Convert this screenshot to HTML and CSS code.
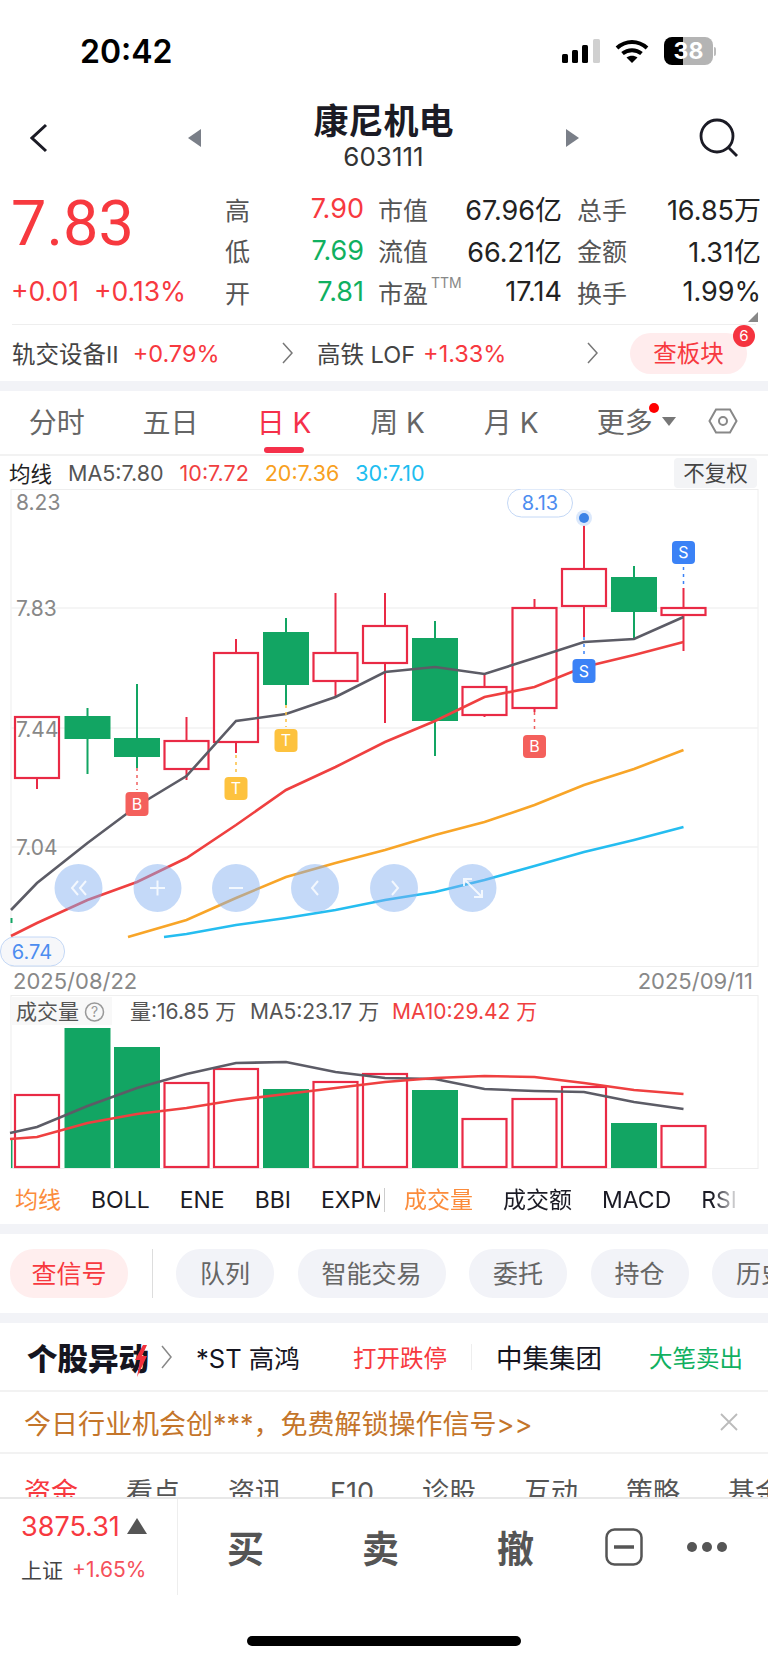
FILE: index.html
```html
<!DOCTYPE html>
<html>
<head>
  <title>康尼机电 603111</title>
  <link rel="stylesheet" href="styles.css">
</head>
<body>
  <div class="page">

    <div class="status">
      <span class="clock">20:42</span>
      <div class="status-icons">
        <svg width="38" height="24" viewBox="0 0 38 24">
          <rect x="0" y="15" width="6" height="9" rx="1.5" fill="#000"/>
          <rect x="10" y="11" width="6" height="13" rx="1.5" fill="#000"/>
          <rect x="20" y="6" width="6" height="18" rx="1.5" fill="#000"/>
          <rect x="31" y="0" width="7" height="24" rx="1.5" fill="#d0d0d0"/>
        </svg>
        <svg class="wifi" width="34" height="24" viewBox="0 0 34 24">
          <path d="M2 9C11 1 23 1 32 9M7.5 14.5C13 10 21 10 26.500 14.500" fill="none" stroke="#000" stroke-width="4"/>
          <path d="M11.500 18.500C15 16 19 16 22.500 18.500L17 24Z" fill="#000"/>
        </svg>
        <div class="battery"><span>38</span></div>
        <span class="battery-nub"></span>
      </div>
    </div>

    <div class="header">
      <svg class="back" width="18" height="30" viewBox="0 0 18 30">
        <path d="M16 2L2 15L16 28" fill="none" stroke="#1b1b25" stroke-width="3"/>
      </svg>
      <span class="arrow-left"></span>
      <div class="title-box">
        <div class="title">康尼机电</div>
        <div class="code">603111</div>
      </div>
      <span class="arrow-right"></span>
      <svg class="search" width="40" height="40" viewBox="0 0 40 40">
        <circle cx="18" cy="18" r="16" fill="none" stroke="#1b1b25" stroke-width="2.800"/>
        <path d="M29 29L38 38" stroke="#1b1b25" stroke-width="2.800"/>
      </svg>
    </div>

    <div class="quote">
      <div class="price-box">
        <div class="price">7.83</div>
        <div class="change"><span>+0.01</span><span>+0.13%</span></div>
      </div>
      <div class="stats">
        <span class="lbl">高</span><span class="val red">7.90</span>
        <span class="lbl">市值</span><span class="val">67.96亿</span>
        <span class="lbl">总手</span><span class="val">16.85万</span>
        <span class="lbl">低</span><span class="val green">7.69</span>
        <span class="lbl">流值</span><span class="val">66.21亿</span>
        <span class="lbl">金额</span><span class="val">1.31亿</span>
        <span class="lbl">开</span><span class="val green">7.81</span>
        <span class="lbl ttm-box">市盈<em class="ttm">TTM</em></span><span class="val">17.14</span>
        <span class="lbl">换手</span><span class="val">1.99%</span>
      </div>
      <span class="fold"></span>
    </div>

    <div class="sectors">
      <div class="sector sector-a">
        <span>轨交设备Ⅱ</span><span class="pct">+0.79%</span>
        <svg class="chev" width="11" height="22" viewBox="0 0 11 22"><path d="M1 1L10 11L1 21" fill="none" stroke="#777" stroke-width="1.500"/></svg>
      </div>
      <div class="sector sector-b">
        <span>高铁 LOF</span><span class="pct">+1.33%</span>
        <svg class="chev" width="11" height="22" viewBox="0 0 11 22"><path d="M1 1L10 11L1 21" fill="none" stroke="#777" stroke-width="1.500"/></svg>
      </div>
      <div class="board-btn">查板块<span class="badge">6</span></div>
    </div>

    <div class="band"></div>

    <div class="tabs">
      <span class="tab">分时</span>
      <span class="tab">五日</span>
      <span class="tab active">日 K</span>
      <span class="tab">周 K</span>
      <span class="tab">月 K</span>
      <span class="tab more">更多<i class="dot"></i><i class="caret"></i></span>
      <svg class="hex" width="30" height="26" viewBox="0 0 30 26">
        <path d="M1.500 13L8 1.500H22L28.500 13L22 24.500H8Z" fill="none" stroke="#888" stroke-width="2"/>
        <circle cx="15" cy="13" r="4" fill="none" stroke="#888" stroke-width="2"/>
      </svg>
    </div>

    <div class="legend">
      <b>均线</b>
      <span class="c-gray">MA5:7.80</span>
      <span class="c-red">10:7.72</span>
      <span class="c-orange">20:7.36</span>
      <span class="c-blue">30:7.10</span>
      <span class="chip">不复权</span>
    </div>

    <svg class="chart" width="768" height="478" viewBox="0 489 768 478">
      <rect class="frame" x="11" y="489.500" width="747" height="477"/>
      <path class="grid" d="M11 608H758M11 728H758M11 847H758"/>

      <g class="wick-down">
        <path d="M87.500 708V774M137 684V768M286 618V705M435 621V756M634 566V639M11.500 918V923"/>
      </g>
      <g class="body-down">
        <rect x="64.500" y="716" width="46" height="23"/>
        <rect x="114" y="738" width="46" height="19"/>
        <rect x="263" y="632" width="46" height="53"/>
        <rect x="412" y="638" width="46" height="83"/>
        <rect x="611" y="577" width="46" height="35"/>
      </g>
      <g class="candle-up">
        <path d="M37 778V789M186.500 717V780M236 639V753M335.500 593V697M385 593V723M484.500 673V717M534.500 599V712M584 518V637M683.500 588V651"/>
        <rect x="15" y="717" width="44" height="61"/>
        <rect x="164.500" y="741" width="44" height="28"/>
        <rect x="214" y="653" width="44" height="89"/>
        <rect x="313.500" y="653" width="44" height="28"/>
        <rect x="363" y="626" width="44" height="37"/>
        <rect x="462.500" y="687" width="44" height="28"/>
        <rect x="512.500" y="608" width="44" height="100"/>
        <rect x="562" y="569" width="44" height="37"/>
        <rect x="661.500" y="608" width="44" height="7"/>
      </g>

      <text class="axis" x="16" y="510">8.23</text>
      <text class="axis" x="16" y="616">7.83</text>
      <text class="axis" x="16" y="737">7.44</text>
      <text class="axis" x="16" y="855">7.04</text>

      <polyline class="ma ma-gray" points="11,910 37,883 87.500,843 137,806 186.500,776 236,721 286,714 335.500,697 385,672 435,667 484.500,674 534.500,658 584,642 634,639 683.500,617"/>
      <polyline class="ma ma-red" points="11,936 37,923 87.500,900 137,882 186.500,858 236,825 286,790 335.500,767 385,742 435,721 484.500,697 534.500,687 584,667 634,655 683.500,642"/>
      <polyline class="ma ma-orange" points="128,937 186.500,920 236,898 286,877 335.500,863 385,850 435,835 484.500,822 534.500,805 584,785 634,769 683.500,750"/>
      <polyline class="ma ma-blue" points="164,937 186.500,934 236,925 286,918 335.500,910 385,900 435,892 484.500,880 534.500,866 584,852 634,840 683.500,827"/>

      <path class="dots-blue" d="M584 637V657M683.500 567V587"/>
      <path class="dots-red" d="M137 768V790M534.500 712V733"/>
      <path class="dots-amber" d="M236 755V775M286 705V727"/>

      <g class="mark mark-s"><rect x="572.500" y="659" width="23" height="24" rx="4"/><rect x="672" y="541" width="23" height="23" rx="4"/></g>
      <g class="mark mark-b"><rect x="125.500" y="792" width="23" height="24" rx="4"/><rect x="523" y="735" width="23" height="23" rx="4"/></g>
      <g class="mark mark-t"><rect x="224.500" y="777" width="23" height="23" rx="4"/><rect x="274.500" y="729" width="23" height="23" rx="4"/></g>
      <text class="mark-text" x="584" y="677">S</text>
      <text class="mark-text" x="683.500" y="558">S</text>
      <text class="mark-text" x="137" y="810">B</text>
      <text class="mark-text" x="534.500" y="752">B</text>
      <text class="mark-text" x="236" y="794">T</text>
      <text class="mark-text" x="286" y="746">T</text>

      <circle class="peak-halo" cx="584" cy="518" r="8"/>
      <circle class="peak" cx="584" cy="518" r="5"/>
      <rect class="callout" x="507.500" y="489" width="65" height="28" rx="14"/>
      <text class="callout-text" x="540" y="510">8.13</text>
      <rect class="callout grey" x="0.500" y="937" width="64" height="29" rx="14"/>
      <text class="callout-text" x="32" y="959">6.74</text>

      <g class="nav">
        <circle cx="78.500" cy="888" r="24"/>
        <circle cx="157.500" cy="888" r="24"/>
        <circle cx="236" cy="888" r="24"/>
        <circle cx="315" cy="888" r="24"/>
        <circle cx="394" cy="888" r="24"/>
        <circle cx="472.500" cy="888" r="24"/>
      </g>
      <g class="nav-icon">
        <path d="M78 881L72 888L78 895M86 881L80 888L86 895"/>
        <path d="M150 888H165M157.500 880.500V895.500"/>
        <path d="M229 888H243"/>
        <path d="M318 881L312 888L318 895"/>
        <path d="M392 881L398 888L392 895"/>
        <path d="M464 879L482 897M464 886V879H472M482 890V897H474"/>
      </g>
    </svg>

    <div class="dates"><span>2025/08/22</span><span>2025/09/11</span></div>

    <svg class="volume" width="768" height="175" viewBox="0 995 768 175">
      <rect class="frame" x="11" y="995.500" width="747" height="173"/>
      <rect class="vol-label-bg" x="11" y="997" width="101" height="28"/>
      <text class="vol-title" x="16" y="1019">成交量</text>
      <circle class="help" cx="94.500" cy="1012" r="9"/>
      <text class="help-text" x="94.500" y="1017">?</text>
      <text class="vol-title" x="130" y="1019">量:16.85 万</text>
      <text class="vol-title" x="250" y="1019">MA5:23.17 万</text>
      <text class="vol-title vol-red" x="392" y="1019">MA10:29.42 万</text>

      <g class="body-down">
        <rect x="11" y="1140" width="1.500" height="28"/>
        <rect x="64.500" y="1028" width="46" height="140"/>
        <rect x="114" y="1047" width="46" height="121"/>
        <rect x="263" y="1089" width="46" height="79"/>
        <rect x="412" y="1090" width="46" height="78"/>
        <rect x="611" y="1123" width="46" height="45"/>
      </g>
      <g class="candle-up">
        <rect x="15" y="1095" width="44" height="72"/>
        <rect x="164.500" y="1083" width="44" height="84"/>
        <rect x="214" y="1069" width="44" height="98"/>
        <rect x="313.500" y="1082" width="44" height="85"/>
        <rect x="363" y="1074" width="44" height="93"/>
        <rect x="462.500" y="1119" width="44" height="48"/>
        <rect x="512.500" y="1099" width="44" height="68"/>
        <rect x="562" y="1087" width="44" height="80"/>
        <rect x="661.500" y="1126" width="44" height="41"/>
      </g>
      <polyline class="ma ma-gray" points="10,1133 37,1127 87.500,1106 137,1088 186.500,1074 236,1063 286,1062 335.500,1072 385,1078 435,1079 484.500,1089 534.500,1091 584,1092 634,1102 683.500,1109"/>
      <polyline class="ma ma-red" points="10,1139 37,1137 87.500,1123 137,1114 186.500,1108 236,1100 286,1094 335.500,1088 385,1082 435,1078 484.500,1076 534.500,1077 584,1083 634,1090 683.500,1094"/>
    </svg>

    <div class="indicators">
      <div class="ind-group ind-left">
        <span class="on">均线</span><span>BOLL</span><span>ENE</span><span>BBI</span><span>EXPMA</span>
      </div>
      <i class="ind-line"></i>
      <div class="ind-group ind-right">
        <span class="on">成交量</span><span>成交额</span><span>MACD</span><span>RSI</span>
      </div>
    </div>

    <div class="band"></div>

    <div class="pills">
      <span class="pill hot">查信号</span>
      <i class="pill-line"></i>
      <span class="pill">队列</span>
      <span class="pill">智能交易</span>
      <span class="pill">委托</span>
      <span class="pill">持仓</span>
      <span class="pill">历史</span>
    </div>

    <div class="band"></div>

    <div class="news">
      <div class="news-logo">个股异动
        <svg class="bolt" width="16" height="32" viewBox="0 0 16 32"><path d="M10 0L2 15H7L4 32L14 11H9L14 0Z" fill="#f0303c"/></svg>
      </div>
      <svg class="news-chev" width="11" height="24" viewBox="0 0 11 24"><path d="M1 1L10 12L1 23" fill="none" stroke="#888" stroke-width="1.500"/></svg>
      <span class="news-name first">*ST 高鸿</span>
      <span class="news-tag red">打开跌停</span>
      <i class="news-line"></i>
      <span class="news-name">中集集团</span>
      <span class="news-tag green">大笔卖出</span>
    </div>

    <div class="promo">
      <span>今日行业机会创***，免费解锁操作信号&gt;&gt;</span>
      <svg width="20" height="20" viewBox="0 0 20 20"><path d="M2 2L18 18M18 2L2 18" stroke="#bbb" stroke-width="1.800"/></svg>
    </div>

    <div class="subtabs">
      <span class="red">资金</span><span>看点</span><span>资讯</span><span>F10</span><span>诊股</span><span>互动</span><span>策略</span><span>基金</span>
    </div>

    <div class="bottom">
      <div class="trade-bar">
        <div class="index-box">
          <div class="index-top"><span class="index-num">3875.31</span><i class="index-up"></i></div>
          <div class="index-low"><span>上证</span><span class="red">+1.65%</span></div>
        </div>
        <span class="trade">买</span>
        <span class="trade">卖</span>
        <span class="trade">撤</span>
        <svg class="fold-btn" width="38" height="38" viewBox="0 0 38 38">
          <rect x="1.500" y="1.500" width="35" height="35" rx="8" fill="none" stroke="#555" stroke-width="2.500"/>
          <path d="M9 19H29" stroke="#555" stroke-width="3.500"/>
        </svg>
        <svg class="more-btn" width="42" height="12" viewBox="0 0 42 12">
          <circle cx="6" cy="6" r="5" fill="#555"/><circle cx="21" cy="6" r="5" fill="#555"/><circle cx="36" cy="6" r="5" fill="#555"/>
        </svg>
      </div>
      <div class="home-bar"></div>
    </div>

  </div>
</body>
</html>
```

FILE: styles.css
```css
body {
  margin: 0;
  background: #fff;
  font-family: Inter, "Noto Sans CJK SC", sans-serif;
  color: #222;
}

.page {
  width: 768px;
  height: 1663px;
  overflow: hidden;
}

.red { color: #f7393f; }
.green { color: #10b060; }

.band {
  height: 10px;
  background: #f2f3f7;
}

/* status bar */
.status {
  height: 102px;
  display: flex;
  align-items: center;
  justify-content: space-between;
  padding: 0 52px 0 80px;
}

.clock {
  font-size: 32px;
  font-weight: 600;
  color: #000;
}

.status-icons {
  display: flex;
  align-items: center;
}

.wifi { margin-left: 15px; }

.battery {
  width: 49px;
  height: 28px;
  margin-left: 15px;
  border-radius: 8px;
  background: linear-gradient(90deg, #000 38%, #b4b4b4 38%);
  color: #fff;
  font-size: 23px;
  font-weight: 700;
  line-height: 28px;
  text-align: center;
}

.battery-nub {
  width: 2px;
  height: 9px;
  margin-left: 1px;
  background: #bbb;
  border-radius: 0 2px 2px 0;
}

/* header */
.header {
  height: 72px;
  display: flex;
  align-items: center;
  padding-left: 30px;
}

.arrow-left, .arrow-right {
  width: 0;
  height: 0;
  border-top: 9px solid transparent;
  border-bottom: 9px solid transparent;
}

.arrow-left {
  margin-left: 140px;
  border-right: 13px solid #7a7f88;
}

.arrow-right {
  border-left: 13px solid #7a7f88;
}

.title-box {
  flex: 1;
  text-align: center;
  color: #1b1b25;
  margin-top: -3px;
}

.title {
  font-size: 35px;
  font-weight: 700;
  line-height: 40px;
}

.code {
  font-size: 26px;
  line-height: 32px;
  color: #333;
}

.search {
  margin-left: 120px;
  margin-right: 29px;
}

/* quote block */
.quote {
  height: 151px;
  box-sizing: border-box;
  padding: 14px 8px 0 11px;
  display: flex;
  position: relative;
}

.quote::after {
  content: "";
  position: absolute;
  left: 12px;
  right: 12px;
  bottom: 0;
  height: 1px;
  background: #eee;
}

.price-box {
  width: 213px;
  color: #f7393f;
}

.price {
  font-family: Roboto, sans-serif;
  font-size: 63px;
  line-height: 66px;
  margin-top: 3px;
}

.change {
  display: flex;
  gap: 15px;
  margin-top: 17px;
  font-size: 26.500px;
  line-height: 34px;
}

.stats {
  display: grid;
  grid-template-columns: 26px 113px 65px 133px 66px 133px;
  grid-auto-rows: 41.500px;
  align-items: center;
  font-size: 25px;
}

.lbl {
  text-align: right;
  color: #555;
  white-space: nowrap;
}

.val {
  text-align: right;
  white-space: nowrap;
  font-size: 27px;
  margin-right: -1px;
}

.ttm-box { position: relative; }

.ttm {
  position: absolute;
  left: 100%;
  top: 0;
  margin-left: 3px;
  font-size: 14px;
  font-style: normal;
  color: #888;
}

.fold {
  position: absolute;
  left: 748px;
  top: 138px;
  width: 0;
  height: 0;
  border-left: 10px solid transparent;
  border-bottom: 10px solid #888;
}

/* sector row */
.sectors {
  height: 56px;
  display: flex;
  align-items: center;
  padding-left: 12px;
  font-size: 23.500px;
  color: #444;
}

.sector {
  display: flex;
  align-items: center;
  white-space: nowrap;
}

.sector-a {
  width: 281px;
  margin-right: 24px;
}

.sector-b {
  width: 281px;
  margin-right: 32px;
}

.pct {
  margin-left: 14px;
  color: #f7393f;
}

.sector-b .pct { margin-left: 8px; }

.chev { margin-left: auto; }

.board-btn {
  width: 117px;
  height: 41px;
  line-height: 41px;
  text-align: center;
  border-radius: 21px;
  background: #ffeced;
  color: #f7393f;
  position: relative;
}

.badge {
  position: absolute;
  right: -8px;
  top: -8px;
  width: 22px;
  height: 22px;
  border-radius: 50%;
  background: #f5333f;
  color: #fff;
  font-size: 15px;
  line-height: 22px;
  text-align: center;
}

/* period tabs */
.tabs {
  height: 65px;
  box-sizing: border-box;
  border-bottom: 2px solid #f2f2f2;
  display: flex;
  align-items: center;
  padding-bottom: 4px;
}

.tab {
  width: 113.600px;
  text-align: center;
  font-size: 28px;
  color: #666;
  position: relative;
}

.tab.active { color: #f5304a; }

.tab.active::after {
  content: "";
  position: absolute;
  left: 37px;
  top: 46px;
  width: 40px;
  height: 6px;
  border-radius: 3px;
  background: #f5304a;
}

.dot {
  position: absolute;
  left: 81px;
  top: 2px;
  width: 10px;
  height: 10px;
  border-radius: 50%;
  background: #f00;
}

.caret {
  position: absolute;
  left: 94px;
  top: 16px;
  width: 0;
  height: 0;
  border-left: 7px solid transparent;
  border-right: 7px solid transparent;
  border-top: 9px solid #777;
}

.hex { margin-left: 26px; }

/* MA legend */
.legend {
  height: 33px;
  display: flex;
  align-items: center;
  padding: 0 11px 0 9px;
  font-size: 21.500px;
}

.legend b {
  font-weight: 400;
  color: #222;
  margin-right: 16px;
}

.legend span { margin-right: 16px; }

.c-gray { color: #555; }
.c-red { color: #f0403f; }
.c-orange { color: #f8a020; }
.c-blue { color: #20bdf0; }

.legend .chip {
  margin: 0 0 0 auto;
  width: 83px;
  height: 30px;
  line-height: 30px;
  text-align: center;
  border-radius: 4px;
  background: #f3f4f6;
  color: #444;
  font-size: 21.500px;
}

/* charts */
.chart, .volume { display: block; }

.frame {
  fill: none;
  stroke: #eee;
}

.grid {
  fill: none;
  stroke: #f2f2f2;
  stroke-width: 1.500;
}

.axis {
  font-size: 21px;
  fill: #888;
}

.wick-down path {
  stroke: #12a563;
  stroke-width: 2;
  fill: none;
}

.body-down rect { fill: #12a563; }

.candle-up path {
  stroke: #e92a45;
  stroke-width: 2;
  fill: none;
}

.candle-up rect {
  fill: #fff;
  stroke: #e92a45;
  stroke-width: 2.200;
}

.volume .candle-up rect { fill: none; }

.ma {
  fill: none;
  stroke-width: 2.600;
}

.ma-gray { stroke: #5c5c66; }
.ma-red { stroke: #ef4040; }
.ma-orange { stroke: #f8a528; }
.ma-blue { stroke: #25bdf0; }

.dots-blue, .dots-red, .dots-amber {
  fill: none;
  stroke-width: 1.500;
  stroke-dasharray: 3 4;
}

.dots-blue { stroke: #3b82f6; }
.dots-red { stroke: #f06060; }
.dots-amber { stroke: #fcc040; }

.mark-s rect { fill: #3b82f6; }
.mark-b rect { fill: #f4605c; }
.mark-t rect { fill: #fdc23e; }

.mark-text {
  font-size: 16px;
  fill: #fff;
  text-anchor: middle;
}

.peak-halo { fill: #dbe8fb; }
.peak { fill: #3b82e6; }

.callout {
  fill: #fff;
  stroke: #c4d8f6;
}

.callout.grey { fill: #f6f7fa; }

.callout-text {
  font-size: 20px;
  fill: #4d8df0;
  text-anchor: middle;
}

.nav circle { fill: rgba(130, 175, 240, 0.47); }

.nav-icon path {
  fill: none;
  stroke: #fff;
  stroke-width: 2;
  opacity: 0.8;
}

.dates {
  height: 28px;
  display: flex;
  justify-content: space-between;
  align-items: center;
  padding: 0 15px 0 13px;
  font-size: 22px;
  color: #888;
}

.vol-label-bg { fill: #f8f8f8; }

.vol-title {
  font-size: 21px;
  fill: #555;
}

.vol-red { fill: #f0403f; }

.help {
  fill: none;
  stroke: #999;
  stroke-width: 1.500;
}

.help-text {
  font-size: 14px;
  fill: #999;
  text-anchor: middle;
}

/* indicator row */
.indicators {
  height: 54px;
  box-sizing: border-box;
  padding: 6px 0 0 15px;
  display: flex;
  align-items: center;
  font-size: 23px;
  color: #1b1b25;
}

.ind-group {
  display: flex;
  gap: 30px;
  overflow: hidden;
  white-space: nowrap;
  line-height: 34px;
}

.ind-left { width: 365px; }

.ind-right {
  width: 336px;
  -webkit-mask-image: linear-gradient(90deg, #000 92%, transparent);
  mask-image: linear-gradient(90deg, #000 92%, transparent);
}

.on { color: #fb8c3c; }

.ind-line {
  width: 1px;
  height: 24px;
  margin: 0 19px 0 4px;
  background: #ccc;
}

/* pills */
.pills {
  height: 79px;
  box-sizing: border-box;
  display: flex;
  align-items: center;
  gap: 23.500px;
  padding-left: 10px;
  overflow: hidden;
  font-size: 25px;
  white-space: nowrap;
  color: #666;
}

.pill {
  flex: none;
  height: 49px;
  line-height: 51px;
  padding: 0 24px;
  border-radius: 24px;
  background: #f2f3f8;
}

.pill.hot {
  width: 118px;
  padding: 0;
  text-align: center;
  background: #ffeeee;
  color: #f7393f;
}

.pill-line {
  flex: none;
  width: 1px;
  height: 49px;
  background: #ddd;
}

/* news row */
.news {
  height: 69px;
  box-sizing: border-box;
  border-bottom: 2px solid #f2f2f2;
  display: flex;
  align-items: center;
  padding-left: 27px;
  white-space: nowrap;
}

.news-logo {
  position: relative;
  width: 122px;
  font-size: 30.500px;
  font-weight: 900;
  color: #15151f;
}

.bolt {
  position: absolute;
  right: 0;
  top: 10px;
}

.news-chev { margin-left: 12px; }

.news-name {
  font-size: 26.500px;
  color: #15151f;
}

.news-name.first {
  width: 157px;
  margin-left: 24px;
  font-size: 25.500px;
}

.news-tag { font-size: 23.500px; }

.news-line {
  width: 1px;
  height: 26px;
  margin: 0 24px;
  background: #eee;
}

.news .green { margin-left: 47px; }

/* promo banner */
.promo {
  height: 62px;
  box-sizing: border-box;
  border-bottom: 2px solid #f2f2f2;
  display: flex;
  align-items: center;
  justify-content: space-between;
  padding: 0 29px 0 24px;
  font-size: 27px;
  color: #c4752a;
  white-space: nowrap;
}

/* info tabs, cut off by the trade bar */
.subtabs {
  height: 43px;
  box-sizing: border-box;
  padding: 21px 0 0 24px;
  display: flex;
  gap: 48px;
  overflow: hidden;
  font-size: 27px;
  line-height: 36px;
  color: #555;
  white-space: nowrap;
}

/* trade bar */
.bottom {
  height: 165px;
  box-sizing: border-box;
  border-top: 2px solid #e8e8e8;
}

.trade-bar {
  height: 96px;
  display: flex;
  align-items: center;
}

.index-box {
  width: 156px;
  height: 96px;
  padding-left: 21px;
  border-right: 1px solid #eee;
}

.index-top {
  display: flex;
  align-items: center;
  height: 50px;
  margin-top: 2px;
}

.index-num {
  font-size: 27px;
  color: #f7393f;
}

.index-up {
  width: 0;
  height: 0;
  margin-left: 7px;
  border-left: 10px solid transparent;
  border-right: 10px solid transparent;
  border-bottom: 16px solid #555;
}

.index-low {
  display: flex;
  gap: 9px;
  height: 36px;
  align-items: center;
  font-size: 21px;
  color: #444;
}

.index-low .red { color: #f5505a; }

.trade {
  width: 135px;
  text-align: center;
  font-size: 37px;
  font-weight: 700;
  color: #555;
}

.fold-btn { margin-left: 22px; }

.more-btn { margin-left: 43px; }

.home-bar {
  width: 274px;
  height: 10px;
  margin: 41px auto 0;
  border-radius: 5px;
  background: #000;
}
```
